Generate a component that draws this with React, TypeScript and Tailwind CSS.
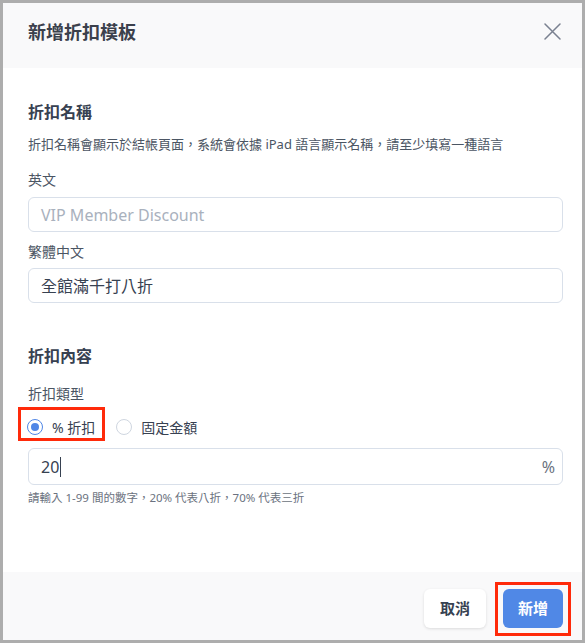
import React, { useState } from 'react'

const font = { fontFamily: '"Noto Sans", "Noto Sans CJK TC", sans-serif' }

// 單選按鈕
const Radio = ({ checked, label }: { checked: boolean; label: string }) => (
  <div className="flex items-center gap-[9px]">
    <span
      className={
        checked
          ? 'w-4 h-4 rounded-full border border-[#4f86e6] flex items-center justify-center bg-white'
          : 'w-4 h-4 rounded-full border border-[#cfd6e0] bg-white'
      }
    >
      {checked && <span className="w-2 h-2 rounded-full bg-[#4f86e6]" />}
    </span>
    <span className="text-[14px] text-[#374151]">{label}</span>
  </div>
)

const App = () => {
  const [value] = useState('20')

  return (
    <div
      style={font}
      className="w-[585px] h-[643px] border-[3px] border-[#adadad] bg-white flex flex-col overflow-hidden"
    >
      {/* header */}
      <div className="h-[65px] shrink-0 bg-[#f9f9fa] flex items-center justify-between pl-[25px] pr-[21px]">
        <h1 className="text-[18px] font-bold text-[#3b404c] leading-[26px] -mt-[8px]">新增折扣模板</h1>
        <svg width="17" height="17" viewBox="0 0 17 17" className="-mt-[8px]">
          <path d="M1 1 L16 16 M16 1 L1 16" stroke="#7a8190" strokeWidth="1.5" strokeLinecap="round" />
        </svg>
      </div>

      {/* body */}
      <div className="flex-1 flex flex-col pl-[25px] pr-[19px]">
        <h2 className="mt-[32px] text-[16px] font-bold leading-[24px] text-[#374151]">折扣名稱</h2>
        <p className="mt-[11px] text-[13px] leading-[18px] text-[#4b5563]">
          折扣名稱會顯示於結帳頁面，系統會依據 iPad 語言顯示名稱，請至少填寫一種語言
        </p>

        <label className="mt-[17px] text-[14px] leading-[20px] text-[#4b5563]">英文</label>
        <div className="mt-[7px] h-[35px] rounded-[6px] border border-[#d9e0ea] flex items-center px-[12px]">
          <span className="text-[16px] text-[#a9b1bd]">VIP Member Discount</span>
        </div>

        <label className="mt-[10px] text-[14px] leading-[20px] text-[#4b5563]">繁體中文</label>
        <div className="mt-[6px] h-[35px] rounded-[6px] border border-[#d9e0ea] flex items-center px-[12px]">
          <span className="text-[16px] text-[#374151]">全館滿千打八折</span>
        </div>

        <h2 className="mt-[41px] text-[16px] font-bold leading-[24px] text-[#374151]">折扣內容</h2>
        <label className="mt-[16px] text-[14px] leading-[20px] text-[#4b5563]">折扣類型</label>

        <div className="mt-[6px] h-[34px] flex items-center gap-[21px] -ml-px">
          <div className="relative">
            <span className="absolute -left-[9px] -top-[10px] w-[87px] h-[34px] border-[3px] border-[#ff2a0a]" />
            <Radio checked label="% 折扣" />
          </div>
          <Radio checked={false} label="固定金額" />
        </div>

        <div className="mt-[4px] h-[37px] rounded-[6px] border border-[#d9e0ea] flex items-center justify-between pl-[12px] pr-[7px]">
          <span className="flex items-center text-[16px] text-[#374151]">
            {value}
            <span className="ml-[1px] w-px h-[20px] bg-[#374151]" />
          </span>
          <span className="text-[16px] text-[#6b7280]">%</span>
        </div>
        <p className="mt-[4px] text-[11.5px] leading-[18px] text-[#6b7280]">
          請輸入 1-99 間的數字，20% 代表八折，70% 代表三折
        </p>
      </div>

      {/* footer */}
      <div className="h-[68px] shrink-0 bg-[#f9f9fa] flex items-start justify-end gap-[17px] pt-[17px] pr-[19px]">
        <button className="w-[62px] h-[39px] rounded-[6px] bg-white shadow-[0_1px_3px_rgba(0,0,0,0.12)] text-[15px] font-bold text-[#374151]">
          取消
        </button>
        <div className="relative">
          <span className="absolute -left-[8px] -top-[7px] -right-[8px] -bottom-[8px] border-[3px] border-[#ff2a0a]" />
          <button className="w-[60px] h-[39px] rounded-[6px] bg-[#5088e6] text-[15px] font-bold text-white">
            新增
          </button>
        </div>
      </div>
    </div>
  )
}

export default App
